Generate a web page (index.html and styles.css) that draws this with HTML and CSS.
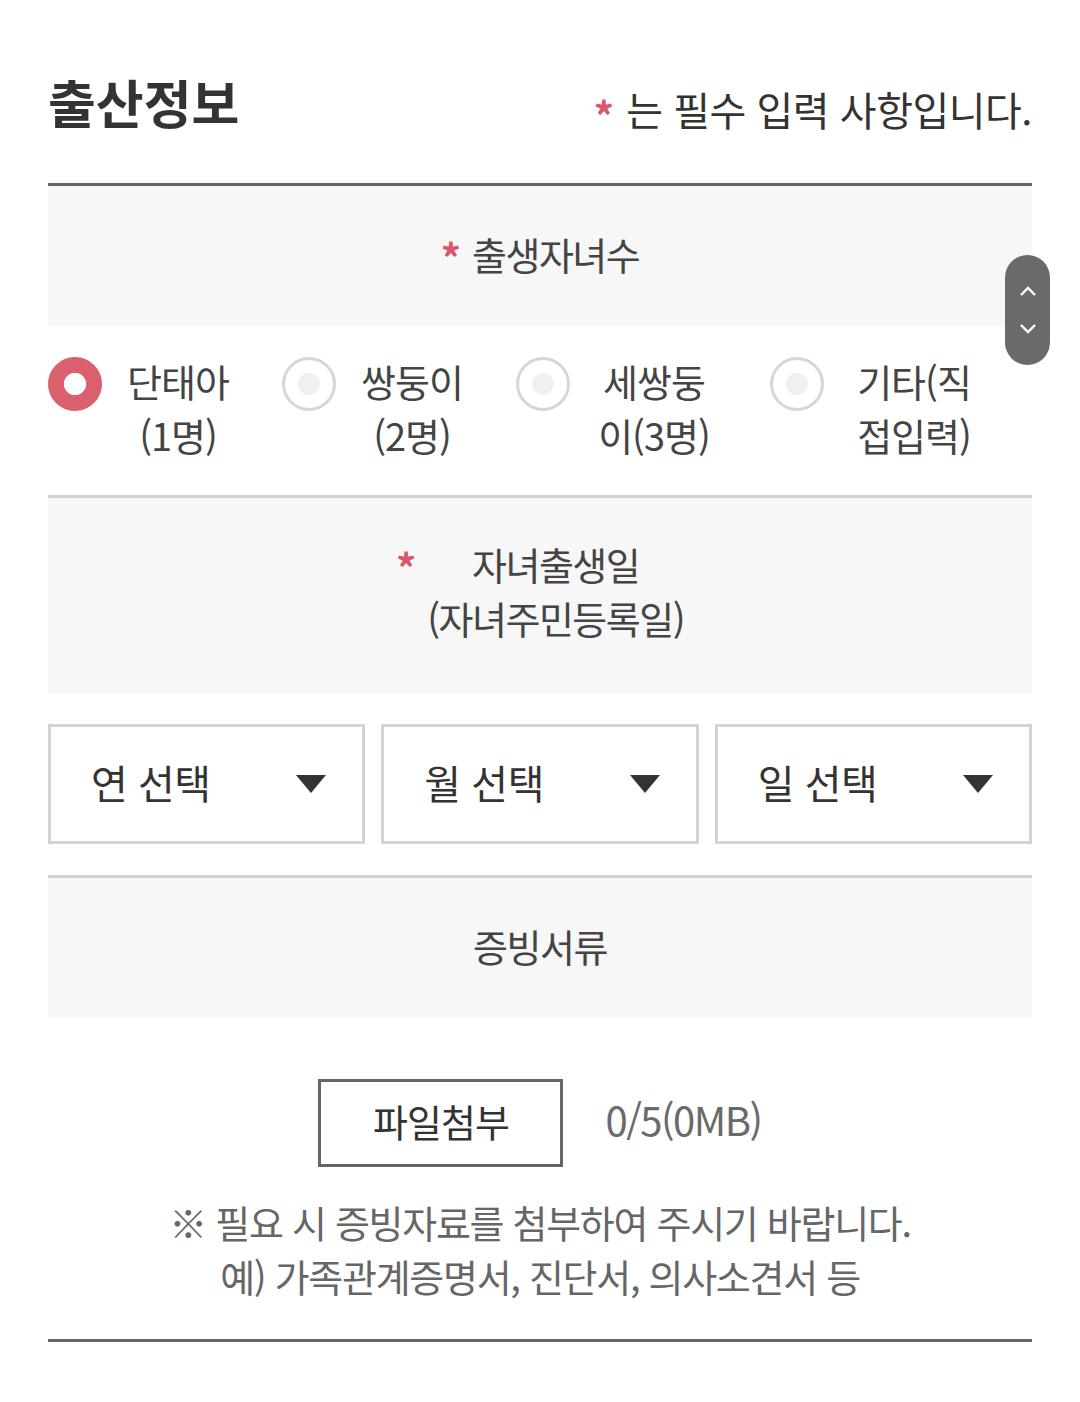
FILE: index.html
```html
<!DOCTYPE html>
<html lang="ko">
<head>
    <meta charset="UTF-8">
    <meta name="viewport" content="width=device-width, initial-scale=1.0">
    <title>출산정보</title>
    <link rel="stylesheet" href="styles.css">
</head>
<body>

    <div class="page">
        <div class="head">
            <h1 class="title">출산정보</h1>
            <p class="required-note"><span class="star">*</span> 는 필수 입력 사항입니다.</p>
        </div>

        <div class="form">
            <div class="field-head">
                <span class="star">*</span>
                <span class="field-label">출생자녀수</span>
            </div>
            <div class="radio-row">
                <label class="radio-item">
                    <span class="radio checked"></span>
                    <span class="radio-text">단태아 (1명)</span>
                </label>
                <label class="radio-item">
                    <span class="radio"></span>
                    <span class="radio-text">쌍둥이 (2명)</span>
                </label>
                <label class="radio-item">
                    <span class="radio"></span>
                    <span class="radio-text">세쌍둥이(3명)</span>
                </label>
                <label class="radio-item">
                    <span class="radio"></span>
                    <span class="radio-text">기타(직접입력)</span>
                </label>
            </div>

            <div class="field-head tall">
                <span class="star">*</span>
                <span class="field-label">자녀출생일<br>(자녀주민등록일)</span>
            </div>
            <div class="select-row">
                <div class="select">연 선택<span class="arrow"></span></div>
                <div class="select">월 선택<span class="arrow"></span></div>
                <div class="select">일 선택<span class="arrow"></span></div>
            </div>

            <div class="field-head">
                <span class="field-label">증빙서류</span>
            </div>
            <div class="file-row">
                <button class="file-button">파일첨부</button>
                <span class="file-count">0/5(0MB)</span>
            </div>
            <p class="file-note">※ 필요 시 증빙자료를 첨부하여 주시기 바랍니다.<br>예) 가족관계증명서, 진단서, 의사소견서 등</p>
        </div>
    </div>

    <div class="scroller">
        <svg width="20" height="14" viewBox="0 0 20 14"><path d="M3 10 L10 3 L17 10" fill="none" stroke="#fff" stroke-width="2.4"/></svg>
        <svg width="20" height="14" viewBox="0 0 20 14"><path d="M3 4 L10 11 L17 4" fill="none" stroke="#fff" stroke-width="2.4"/></svg>
    </div>

</body>
</html>
```

FILE: styles.css
```css
body {
    margin: 0;
    font-family: "Noto Sans CJK KR", "Noto Sans", sans-serif;
    color: #333;
    background: #fff;
}
.page {
    padding: 0 48px;
}
.head {
    display: flex;
    justify-content: space-between;
    align-items: flex-start;
    height: 183px;
    padding-top: 70px;
    box-sizing: border-box;
}
.title {
    margin: 0;
    font-size: 52px;
    line-height: 64px;
    font-weight: 700;
    letter-spacing: 0;
    color: #333;
}
.required-note {
    margin: 7px 0 0;
    font-size: 40px;
    line-height: 64px;
    letter-spacing: -0.5px;
    color: #333;
}
.star {
    color: #d9576b;
    font-size: 40px;
    font-weight: 700;
    vertical-align: -6px;
    margin-right: 2px;
}
.form {
    border-top: 3px solid #666;
    border-bottom: 3px solid #666;
}
.field-head {
    display: flex;
    justify-content: center;
    align-items: flex-start;
    background: #f7f7f7;
    padding: 41px 0;
    height: 140px;
    box-sizing: border-box;
}
.field-head.tall {
    height: 195px;
    padding-top: 39px;
}
.field-label {
    display: inline-block;
    text-align: center;
    font-size: 38px;
    line-height: 54px;
    letter-spacing: -1.5px;
    color: #444;
}
.field-head .star {
    line-height: 54px;
    margin-right: 11px;
    vertical-align: 0;
    padding-top: 3px;
}
.radio-row {
    display: grid;
    grid-template-columns: 234px 234px 254px 1fr;
    padding: 28px 0 33px;
    border-bottom: 3px solid #d0d0d0;
}
.radio-item {
    display: flex;
    align-items: flex-start;
}
.radio {
    width: 54px;
    height: 54px;
    margin-top: 3px;
    border-radius: 50%;
    border: 3px solid #d6d6d6;
    box-sizing: border-box;
    display: flex;
    align-items: center;
    justify-content: center;
}
.radio::after {
    content: "";
    width: 22px;
    height: 22px;
    border-radius: 50%;
    background: #f0f0f0;
}
.radio.checked {
    border: 16px solid #dc5f6d;
}
.radio.checked::after {
    background: #fff;
}
.radio-text {
    width: 116px;
    margin-left: 18px;
    text-align: center;
    font-size: 38px;
    line-height: 54px;
    letter-spacing: -1px;
    color: #444;
    word-break: break-all;
}
.radio-item:nth-child(3) .radio-text {
    margin-left: 26px;
}
.radio-item:nth-child(4) .radio-text {
    margin-left: 32px;
}
.select-row {
    display: flex;
    gap: 16px;
    padding: 31px 0;
    border-bottom: 3px solid #d0d0d0;
}
.select {
    flex: 1;
    height: 120px;
    border: 3px solid #d3d3d3;
    box-sizing: border-box;
    display: flex;
    align-items: center;
    justify-content: space-between;
    padding: 0 36px 4px 40px;
    font-size: 40px;
    letter-spacing: -0.5px;
    color: #333;
}
.arrow {
    width: 0;
    height: 0;
    margin-top: 4px;
    border-left: 15px solid transparent;
    border-right: 15px solid transparent;
    border-top: 18px solid #333;
}
.file-row {
    display: flex;
    justify-content: center;
    align-items: center;
    gap: 42px;
    margin-top: 61px;
}
.file-button {
    width: 245px;
    height: 88px;
    padding: 0 0 6px;
    background: #fff;
    border: 3px solid #666;
    font-family: inherit;
    font-size: 38px;
    letter-spacing: -1px;
    color: #333;
}
.file-count {
    margin-bottom: 8px;
    font-size: 40px;
    letter-spacing: -1.5px;
    color: #6a6a6a;
}
.file-note {
    margin: 28px 0 0;
    padding-bottom: 36px;
    text-align: center;
    font-size: 38px;
    line-height: 54px;
    letter-spacing: -1.3px;
    color: #666;
}
.scroller {
    position: absolute;
    top: 255px;
    left: 1005px;
    width: 45px;
    height: 110px;
    border-radius: 23px;
    background: #6a6a6a;
    display: flex;
    flex-direction: column;
    align-items: center;
    justify-content: center;
    gap: 22px;
}
```
